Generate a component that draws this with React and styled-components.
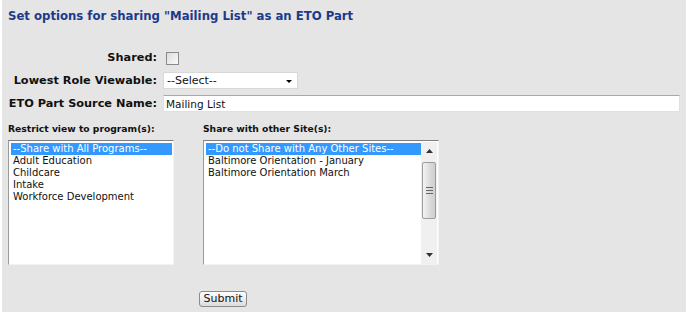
import React from 'react';
import styled, { createGlobalStyle } from 'styled-components';

const GlobalStyle = createGlobalStyle`
	html, body {
		margin: 0;
		padding: 0;
		background: #ffffff;
	}
	body {
		font-family: 'DejaVu Sans', Verdana, sans-serif;
		color: #111;
	}
`;

const programs = ['--Share with All Programs--', 'Adult Education', 'Childcare', 'Intake', 'Workforce Development'];
const sites = ['--Do not Share with Any Other Sites--', 'Baltimore Orientation - January', 'Baltimore Orientation March'];

export default function App() {
	return (
		<>
			<GlobalStyle />
			<Panel>
				<Title>Set options for sharing "Mailing List" as an ETO Part</Title>
				<FormGrid>
					<Label>Shared:</Label>
					<Checkbox />
					<Label>Lowest Role Viewable:</Label>
					<SelectBox>
						<span>--Select--</span>
						<Caret />
					</SelectBox>
					<Label>ETO Part Source Name:</Label>
					<TextInput defaultValue='Mailing List' />
				</FormGrid>
				<ListsRow>
					<ListColumn>
						<ListLabel>Restrict view to program(s):</ListLabel>
						<ListBox $width={166}>
							<Items>
								{programs.map((p, i) => (
									<Item key={p} $selected={i === 0}>{p}</Item>
								))}
							</Items>
						</ListBox>
					</ListColumn>
					<ListColumn>
						<ListLabel>Share with other Site(s):</ListLabel>
						<ListBox $width={236}>
							<Items>
								{sites.map((s, i) => (
									<Item key={s} $selected={i === 0}>{s}</Item>
								))}
							</Items>
							<Scrollbar>
								<ArrowBtn>
									<svg width='7' height='4' viewBox='0 0 7 4'><path d='M0 4 L3.5 0 L7 4 Z' fill='#333' /></svg>
								</ArrowBtn>
								<Track>
									<Thumb>
										<Grip />
										<Grip />
										<Grip />
									</Thumb>
								</Track>
								<ArrowBtn>
									<svg width='7' height='4' viewBox='0 0 7 4'><path d='M0 0 L3.5 4 L7 0 Z' fill='#333' /></svg>
								</ArrowBtn>
							</Scrollbar>
						</ListBox>
					</ListColumn>
				</ListsRow>
				<SubmitRow>
					<SubmitButton type='button'>Submit</SubmitButton>
				</SubmitRow>
			</Panel>
		</>
	);
}

const Panel = styled.div`
	margin-left: 2px;
	height: 312px;
	box-sizing: border-box;
	background: #e5e5e5;
	padding: 8px 6px 0 6px;
`;

const Title = styled.h1`
	margin: 0;
	font-size: 11.7px;
	line-height: 16px;
	font-weight: bold;
	color: #1c3a8c;
`;

const FormGrid = styled.div`
	display: grid;
	grid-template-columns: 149px 1fr;
	column-gap: 6px;
	row-gap: 6px;
	align-items: center;
	margin-top: 26px;
	padding-right: 4px;
`;

const Label = styled.div`
	text-align: right;
	font-size: 11.3px;
	font-weight: bold;
	line-height: 16px;
	color: #111;
	white-space: nowrap;
`;

const Checkbox = styled.div`
	width: 11px;
	height: 11px;
	margin-left: 3px;
	border: 1px solid #8a8a8a;
	background: linear-gradient(135deg, #dcdcdc, #fbfbfb);
`;

const SelectBox = styled.div`
	width: 135px;
	height: 17px;
	box-sizing: border-box;
	background: #fff;
	border: 1px solid #d8d8d8;
	display: flex;
	align-items: center;
	justify-content: space-between;
	padding: 0 5px 0 3px;
	font-size: 11px;
	color: #111;
`;

const Caret = styled.span`
	width: 0;
	height: 0;
	border-left: 3px solid transparent;
	border-right: 3px solid transparent;
	border-top: 3px solid #000;
	margin-top: 2px;
`;

const TextInput = styled.input`
	height: 17px;
	box-sizing: border-box;
	width: 517px;
	margin: 0;
	border: 1px solid #e0e0e0;
	border-top-color: #a8a8a8;
	background: #fff;
	padding: 0 2px;
	font-family: 'DejaVu Sans', Verdana, sans-serif;
	font-size: 10.5px;
	color: #111;
	outline: none;
`;

const ListsRow = styled.div`
	display: flex;
	gap: 29px;
	margin-top: 11px;
`;

const ListColumn = styled.div`
	display: flex;
	flex-direction: column;
	gap: 5px;
`;

const ListLabel = styled.div`
	font-size: 9.2px;
	font-weight: bold;
	line-height: 12px;
	color: #111;
`;

const ListBox = styled.div`
	width: ${p => p.$width}px;
	height: 125px;
	box-sizing: border-box;
	background: #fff;
	border: 1px solid #f2f2f2;
	border-top-color: #7e7e7e;
	border-left-color: #9a9a9a;
	display: flex;
	padding: 2px 1px 1px 2px;
`;

const Items = styled.div`
	flex: 1;
	display: flex;
	flex-direction: column;
`;

const Item = styled.div`
	height: 12px;
	line-height: 12px;
	font-size: 10px;
	padding-left: 2px;
	white-space: nowrap;
	color: ${p => (p.$selected ? '#fff' : '#111')};
	background: ${p => (p.$selected ? '#3399ff' : 'transparent')};
`;

const Scrollbar = styled.div`
	width: 16px;
	margin-top: -1px;
	margin-bottom: -1px;
	background: #f0f0f0;
	display: flex;
	flex-direction: column;
`;

const ArrowBtn = styled.div`
	height: 18px;
	display: flex;
	align-items: center;
	justify-content: center;
`;

const Track = styled.div`
	flex: 1;
	padding: 2px 1px;
`;

const Thumb = styled.div`
	height: 57px;
	box-sizing: border-box;
	border: 1px solid #9c9c9c;
	border-radius: 2px;
	background: linear-gradient(90deg, #f4f4f4, #dadada 60%, #cfcfcf);
	display: flex;
	flex-direction: column;
	align-items: center;
	justify-content: center;
	gap: 2px;
`;

const Grip = styled.div`
	width: 7px;
	height: 1px;
	background: #666;
`;

const SubmitRow = styled.div`
	padding-left: 191px;
	margin-top: 22px;
`;

const SubmitButton = styled.button`
	width: 48px;
	height: 16px;
	box-sizing: border-box;
	padding: 0;
	border: 1px solid #8c8c8c;
	border-radius: 3px;
	background: linear-gradient(#ffffff, #dcdcdc);
	font-family: 'DejaVu Sans', Verdana, sans-serif;
	font-size: 11px;
	line-height: 14px;
	color: #111;
`;
